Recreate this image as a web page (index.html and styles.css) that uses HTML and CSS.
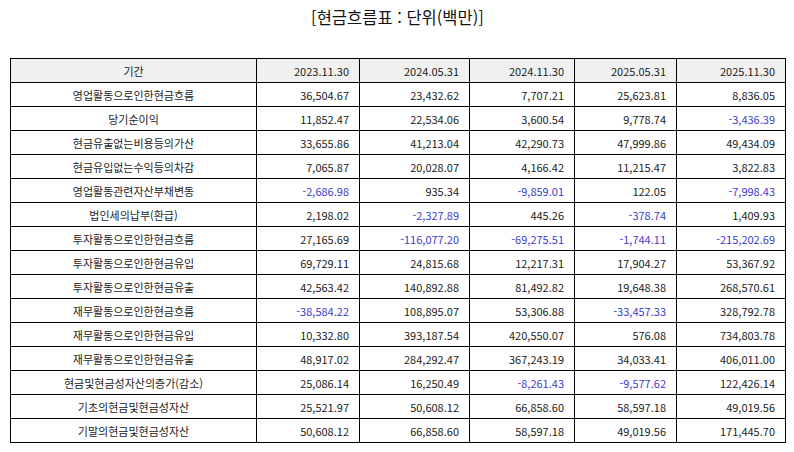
FILE: index.html
```html
<!DOCTYPE html>
<html lang="ko">
<head>
<meta charset="utf-8">
<link rel="stylesheet" href="styles.css">
</head>
<body>
<h1 class="title">[현금흐름표 : 단위(백만)]</h1>
<table class="cf">
<colgroup>
<col class="c-name"><col class="c1"><col class="c2"><col class="c3"><col class="c4"><col class="c5">
</colgroup>
<thead>
<tr><th class="name">기간</th><th>2023.11.30</th><th>2024.05.31</th><th>2024.11.30</th><th>2025.05.31</th><th>2025.11.30</th></tr>
</thead>
<tbody>
<tr><td class="name">영업활동으로인한현금흐름</td><td>36,504.67</td><td>23,432.62</td><td>7,707.21</td><td>25,623.81</td><td>8,836.05</td></tr>
<tr><td class="name">당기순이익</td><td>11,852.47</td><td>22,534.06</td><td>3,600.54</td><td>9,778.74</td><td class="neg">-3,436.39</td></tr>
<tr><td class="name">현금유출없는비용등의가산</td><td>33,655.86</td><td>41,213.04</td><td>42,290.73</td><td>47,999.86</td><td>49,434.09</td></tr>
<tr><td class="name">현금유입없는수익등의차감</td><td>7,065.87</td><td>20,028.07</td><td>4,166.42</td><td>11,215.47</td><td>3,822.83</td></tr>
<tr><td class="name">영업활동관련자산부채변동</td><td class="neg">-2,686.98</td><td>935.34</td><td class="neg">-9,859.01</td><td>122.05</td><td class="neg">-7,998.43</td></tr>
<tr><td class="name">법인세의납부(환급)</td><td>2,198.02</td><td class="neg">-2,327.89</td><td>445.26</td><td class="neg">-378.74</td><td>1,409.93</td></tr>
<tr><td class="name">투자활동으로인한현금흐름</td><td>27,165.69</td><td class="neg">-116,077.20</td><td class="neg">-69,275.51</td><td class="neg">-1,744.11</td><td class="neg">-215,202.69</td></tr>
<tr><td class="name">투자활동으로인한현금유입</td><td>69,729.11</td><td>24,815.68</td><td>12,217.31</td><td>17,904.27</td><td>53,367.92</td></tr>
<tr><td class="name">투자활동으로인한현금유출</td><td>42,563.42</td><td>140,892.88</td><td>81,492.82</td><td>19,648.38</td><td>268,570.61</td></tr>
<tr><td class="name">재무활동으로인한현금흐름</td><td class="neg">-38,584.22</td><td>108,895.07</td><td>53,306.88</td><td class="neg">-33,457.33</td><td>328,792.78</td></tr>
<tr><td class="name">재무활동으로인한현금유입</td><td>10,332.80</td><td>393,187.54</td><td>420,550.07</td><td>576.08</td><td>734,803.78</td></tr>
<tr><td class="name">재무활동으로인한현금유출</td><td>48,917.02</td><td>284,292.47</td><td>367,243.19</td><td>34,033.41</td><td>406,011.00</td></tr>
<tr><td class="name">현금및현금성자산의증가(감소)</td><td>25,086.14</td><td>16,250.49</td><td class="neg">-8,261.43</td><td class="neg">-9,577.62</td><td>122,426.14</td></tr>
<tr><td class="name">기초의현금및현금성자산</td><td>25,521.97</td><td>50,608.12</td><td>66,858.60</td><td>58,597.18</td><td>49,019.56</td></tr>
<tr><td class="name">기말의현금및현금성자산</td><td>50,608.12</td><td>66,858.60</td><td>58,597.18</td><td>49,019.56</td><td>171,445.70</td></tr>
</tbody>
</table>
</body>
</html>
```
FILE: styles.css
```css
html, body {
  margin: 0;
  padding: 0;
  background: #ffffff;
}
body {
  padding: 0 9px 0 10px;
  font-family: "Noto Sans CJK KR", "Noto Sans", sans-serif;
  color: #222222;
}
.title {
  margin: 0;
  padding-top: 6px;
  height: 58px;
  box-sizing: border-box;
  font-size: 16.5px;
  font-weight: 400;
  line-height: 22px;
  text-align: center;
  color: #111111;
}
.cf {
  width: 775px;
  border-collapse: collapse;
  table-layout: fixed;
  font-size: 11px;
}
.c-name { width: 246px; }
.c1 { width: 103px; }
.c2 { width: 110px; }
.c3 { width: 105px; }
.c4 { width: 102px; }
.c5 { width: 109px; }
.cf th, .cf td {
  border: 1px solid #000000;
  height: 23px;
  padding: 0 10px 0 4px;
  text-align: right;
  font-weight: 400;
  line-height: 14px;
  white-space: nowrap;
}
.cf thead th {
  background: #f0f0f0;
}
.cf .name {
  text-align: center;
  padding: 0 4px;
}
.cf .neg {
  color: #3b3bd0;
}
```
